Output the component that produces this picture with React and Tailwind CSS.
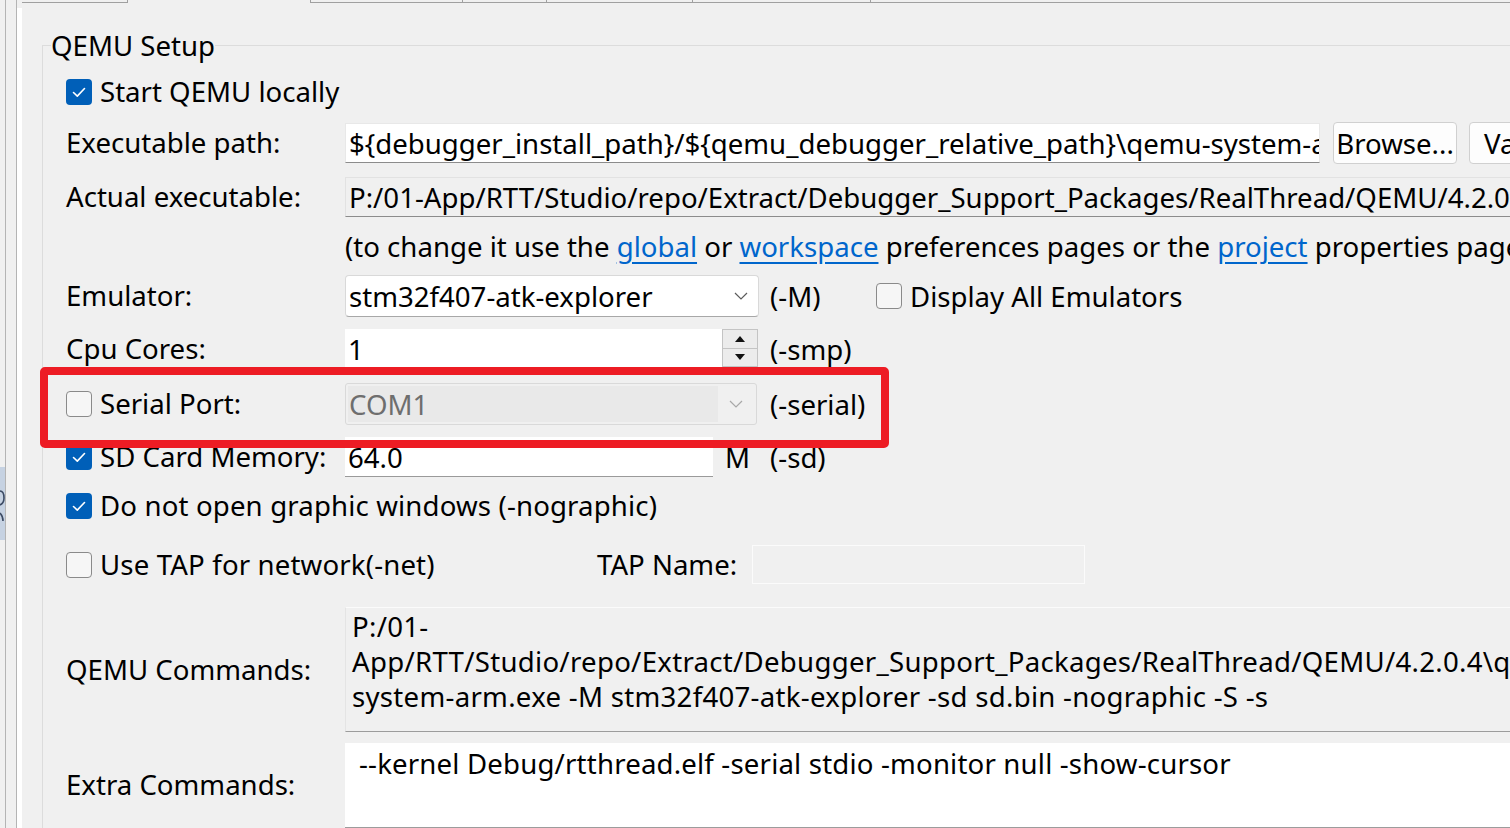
import React from 'react';

const Check = () => (
  <svg viewBox="0 0 26 26" className="h-[26px] w-[26px]">
    <path d="M7.5 13.5l3.8 3.6 7.2-7.6" fill="none" stroke="white" strokeWidth="1.6" strokeLinecap="round" strokeLinejoin="round" />
  </svg>
);

const Checkbox = ({ checked }) =>
  checked ? (
    <div className="flex h-[26px] w-[26px] shrink-0 items-center justify-center rounded-[4px] bg-[#005fb8]">
      <Check />
    </div>
  ) : (
    <div className="h-[26px] w-[26px] shrink-0 rounded-[4px] border-[1.5px] border-[#8a8a8a] bg-[#f6f6f6]" />
  );

const Chevron = ({ color }) => (
  <svg viewBox="0 0 14 8" className="h-[8px] w-[14px]">
    <path d="M1 1l6 6 6-6" fill="none" stroke={color} strokeWidth="1.2" />
  </svg>
);

const Label = ({ children }) => <div className="w-[279px] shrink-0 -translate-y-[1px] whitespace-nowrap">{children}</div>;

const CheckLabel = ({ checked, children }) => (
  <div className="flex w-[279px] shrink-0 items-center gap-[8px] whitespace-nowrap">
    <Checkbox checked={checked} />
    <span className="-translate-y-[1px]">{children}</span>
  </div>
);

const App = () => {
  return (
    <div className="relative flex h-[828px] w-[1510px] overflow-hidden bg-[#f0f0f0] font-['Noto_Sans',sans-serif] text-[27.6px] leading-[40px] text-black">
      {/* left rails */}
      <div className="flex h-full shrink-0">
        <div className="flex w-[5px] flex-col">
          <div className="mt-[467px] h-[73px] overflow-hidden bg-[#c6d2e2]">
            <svg viewBox="0 0 5 73" className="h-[73px] w-[5px]">
              <path d="M0 24c3 0 4 3 4 7s-2 6-4 7M0 46c2 2 3 5 3 8" fill="none" stroke="#3b4a63" strokeWidth="1.6" />
            </svg>
          </div>
        </div>
        <div className="w-px bg-[#b4b4b4]" />
        <div className="w-[10px]" />
        <div className="w-px bg-[#b4b4b4]" />
        <div className="mt-[8px] w-[5px] bg-white" />
      </div>

      <div className="flex min-w-0 flex-1 flex-col">
        {/* tab strip */}
        <div className="flex h-[3px] shrink-0">
          <div className="w-[106px] border-b border-r border-[#a0a0a0]" />
          <div className="w-[182px]" />
          <div className="w-[152px] border-b border-l border-[#a0a0a0]" />
          <div className="w-[84px] border-b border-l border-[#a0a0a0]" />
          <div className="w-[146px] border-b border-l border-[#a0a0a0]" />
          <div className="w-[178px] border-b border-l border-[#a0a0a0]" />
          <div className="flex-1 border-b border-l border-[#a0a0a0]" />
        </div>

        <fieldset className="ml-[20px] mt-[26px] min-w-[1600px] border-l border-t border-[#dcdcdc]">
          <legend className="ml-[8px] p-0 leading-[32px]">QEMU Setup</legend>
          <div className="flex flex-col pl-[23px]">
            <div className="mt-[11px] flex h-[40px] items-center">
              <CheckLabel checked>Start QEMU locally</CheckLabel>
            </div>

            <div className="mt-[11px] flex h-[40px] items-center">
              <Label>Executable path:</Label>
              <div className="flex h-[40px] w-[975px] shrink-0 items-center overflow-hidden whitespace-nowrap border border-[#e8e8e8] border-b-[#8c8c8c] bg-white pl-[3px]">
                {'${debugger_install_path}/${qemu_debugger_relative_path}\\qemu-system-arm.exe'}
              </div>
              <button className="ml-[13px] h-[42px] w-[124px] shrink-0 whitespace-nowrap rounded-[4px] border border-[#d0d0d0] bg-[#fdfdfd] text-center">Browse...</button>
              <button className="ml-[12px] h-[42px] w-[124px] shrink-0 overflow-hidden whitespace-nowrap rounded-[4px] border border-[#d0d0d0] bg-[#fdfdfd] pl-[14px] text-left">Variables...</button>
            </div>

            <div className="mt-[14px] flex h-[40px] items-center">
              <Label>Actual executable:</Label>
              <div className="flex h-[40px] w-[1200px] shrink-0 items-center overflow-hidden whitespace-nowrap border border-[#e2e2e2] border-b-[#8c8c8c] bg-[#f0f0f0] pl-[3px]">
                P:/01-App/RTT/Studio/repo/Extract/Debugger_Support_Packages/RealThread/QEMU/4.2.0.4\qemu-system-arm.exe
              </div>
            </div>

            <div className="mt-[9px] flex h-[40px] items-center whitespace-nowrap pl-[279px]">
              <span>(to change it use the&nbsp;</span>
              <span className="text-[#0066cc] underline underline-offset-[5px]">global</span>
              <span>&nbsp;or&nbsp;</span>
              <span className="text-[#0066cc] underline underline-offset-[5px]">workspace</span>
              <span>&nbsp;preferences pages or the&nbsp;</span>
              <span className="text-[#0066cc] underline underline-offset-[5px]">project</span>
              <span>&nbsp;properties pages)</span>
            </div>

            <div className="mt-[9px] flex h-[42px] items-center">
              <Label>Emulator:</Label>
              <div className="flex h-[42px] w-[414px] shrink-0 items-center justify-between rounded-[4px] border border-[#d9d9d9] border-b-[#a8a8a8] bg-white pl-[3px] pr-[10px]">
                <span>stm32f407-atk-explorer</span>
                <Chevron color="#5c5c5c" />
              </div>
              <span className="ml-[11px] w-[106px] shrink-0">(-M)</span>
              <div className="flex items-center gap-[8px] whitespace-nowrap">
                <Checkbox />
                <span>Display All Emulators</span>
              </div>
            </div>

            <div className="mt-[12px] flex h-[40px] items-center">
              <Label>Cpu Cores:</Label>
              <div className="flex h-[40px] w-[377px] shrink-0 items-center bg-white pl-[3px]">1</div>
              <div className="flex h-[38px] w-[36px] shrink-0 flex-col self-start border border-[#c4c4c4] bg-[#f0f0f0]">
                <div className="flex flex-1 items-center justify-center border-b border-[#c4c4c4] bg-[#ececec]">
                  <svg viewBox="0 0 10 6" className="h-[6px] w-[10px]"><path d="M0 6L5 0l5 6z" fill="#111" /></svg>
                </div>
                <div className="flex flex-1 items-center justify-center bg-[#ececec]">
                  <svg viewBox="0 0 10 6" className="h-[6px] w-[10px]"><path d="M0 0l5 6 5-6z" fill="#111" /></svg>
                </div>
              </div>
              <span className="ml-[12px]">(-smp)</span>
            </div>

            <div className="mt-[14px] flex h-[42px] items-center">
              <CheckLabel>Serial Port:</CheckLabel>
              <div className="flex h-[42px] w-[412px] shrink-0 items-center rounded-[3px] border border-[#d9d9d9] bg-[#f0f0f0] p-[2px]">
                <div className="flex h-full w-[370px] items-center bg-[#e9e9e9] pl-[1px] text-[#6e6e6e]">COM1</div>
                <div className="flex flex-1 items-center justify-center">
                  <Chevron color="#a8a8a8" />
                </div>
              </div>
              <span className="ml-[13px]">(-serial)</span>
            </div>

            <div className="mt-[12px] flex h-[40px] items-center">
              <CheckLabel checked>SD Card Memory:</CheckLabel>
              <div className="flex h-[40px] w-[368px] shrink-0 items-center border-b border-[#9a9a9a] bg-white pl-[3px]">64.0</div>
              <span className="ml-[12px] w-[45px] shrink-0">M</span>
              <span>(-sd)</span>
            </div>

            <div className="mt-[9px] flex h-[40px] items-center">
              <div className="flex items-center gap-[8px] whitespace-nowrap">
                <Checkbox checked />
                <span className="-translate-y-[1px] tracking-[0.15px]">Do not open graphic windows (-nographic)</span>
              </div>
            </div>

            <div className="mt-[19px] flex h-[39px] items-center">
              <div className="flex w-[531px] shrink-0 items-center gap-[8px] whitespace-nowrap">
                <Checkbox />
                <span className="-translate-y-[1px] tracking-[0.15px]">Use TAP for network(-net)</span>
              </div>
              <span className="w-[155px] shrink-0 -translate-y-[1px]">TAP Name:</span>
              <div className="h-[39px] w-[333px] shrink-0 border border-[#fbfbfb] bg-[#f0f0f0]" />
            </div>

            <div className="mt-[23px] flex h-[125px] items-center">
              <Label>QEMU Commands:</Label>
              <div className="h-[125px] w-[1200px] shrink-0 overflow-hidden whitespace-nowrap border-l border-t border-b border-l-[#e4e4e4] border-t-[#fbfbfb] border-b-[#9c9c9c] bg-[#f0f0f0] pl-[6px] pt-[1px] leading-[35px] tracking-[0.28px]">
                <div>P:/01-</div>
                <div>App/RTT/Studio/repo/Extract/Debugger_Support_Packages/RealThread/QEMU/4.2.0.4\qemu-</div>
                <div>system-arm.exe -M stm32f407-atk-explorer -sd sd.bin -nographic -S -s</div>
              </div>
            </div>

            <div className="mt-[11px] flex h-[85px] items-center">
              <div className="w-[279px] shrink-0 -translate-y-[2px] whitespace-nowrap">Extra Commands:</div>
              <div className="h-[85px] w-[1200px] shrink-0 overflow-hidden whitespace-nowrap border-b border-[#9c9c9c] bg-white pl-[14px] pt-[3px] leading-[35px] tracking-[0.18px]">
                --kernel Debug/rtthread.elf -serial stdio -monitor null -show-cursor
              </div>
            </div>
          </div>
        </fieldset>
      </div>

      {/* red highlight drawn over the screenshot */}
      <div className="pointer-events-none absolute left-[40px] top-[367px] h-[81px] w-[849px] rounded-[5px] border-[8px] border-[#ed1c24]" />
    </div>
  );
};

export default App;
